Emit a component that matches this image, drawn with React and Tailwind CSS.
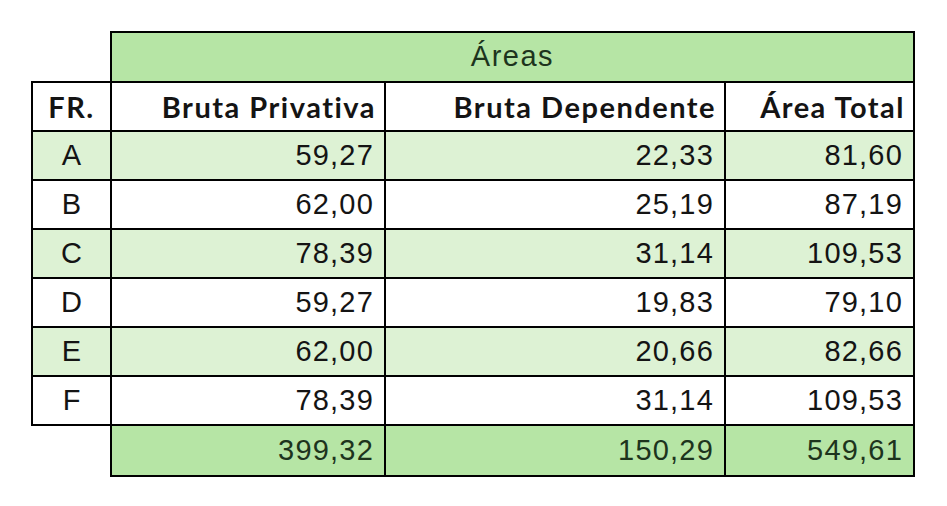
import React from "react"

const rows = [
  ["A", "59,27", "22,33", "81,60"],
  ["B", "62,00", "25,19", "87,19"],
  ["C", "78,39", "31,14", "109,53"],
  ["D", "59,27", "19,83", "79,10"],
  ["E", "62,00", "20,66", "82,66"],
  ["F", "78,39", "31,14", "109,53"],
]

const num = "font-['Liberation_Sans',Arial,sans-serif] text-[29px] tracking-[1.2px] text-right pr-[10px]"
const head = "font-['Lato',sans-serif] font-bold text-[29px] text-right pr-[8px] tracking-[1.5px]"

export default function App() {
  return (
    <div className="w-[947px] h-[506px] bg-white pt-[31px] pl-[31px] text-[#141414]">
      <table className="border-collapse table-fixed w-[884px]">
        <colgroup>
          <col className="w-[79px]" />
          <col className="w-[274px]" />
          <col className="w-[340px]" />
          <col className="w-[189px]" />
        </colgroup>
        <tbody>
          {/* Areas header */}
          <tr className="h-[50px]">
            <td className="border-0" />
            <td
              colSpan={3}
              className="border-2 border-black bg-[#b6e5a5] text-center font-['Liberation_Sans',Arial,sans-serif] text-[29px] tracking-[1.5px] text-[#1d341d]"
            >
              Áreas
            </td>
          </tr>
          <tr className="h-[49px]">
            <td className="border-2 border-black text-center font-['Lato',sans-serif] font-bold text-[29px] tracking-[1.5px]">FR.</td>
            <td className={`border-2 border-black ${head}`}>Bruta Privativa</td>
            <td className={`border-2 border-black ${head}`}>Bruta Dependente</td>
            <td className={`border-2 border-black ${head}`}>Área Total</td>
          </tr>
          {rows.map((r, i) => (
            <tr key={r[0]} className={`h-[49px] ${i % 2 === 0 ? "bg-[#ddf2d4]" : "bg-white"}`}>
              <td className="border-2 border-black text-center font-['Liberation_Sans',Arial,sans-serif] text-[29px]">
                {r[0]}
              </td>
              <td className={`border-2 border-black ${num}`}>{r[1]}</td>
              <td className={`border-2 border-black ${num}`}>{r[2]}</td>
              <td className={`border-2 border-black ${num}`}>{r[3]}</td>
            </tr>
          ))}
          {/* totals */}
          <tr className="h-[51px]">
            <td className="border-0 bg-white" />
            <td className={`border-2 border-black bg-[#b6e5a5] text-[#1d341d] ${num}`}>399,32</td>
            <td className={`border-2 border-black bg-[#b6e5a5] text-[#1d341d] ${num}`}>150,29</td>
            <td className={`border-2 border-black bg-[#b6e5a5] text-[#1d341d] ${num}`}>549,61</td>
          </tr>
        </tbody>
      </table>
    </div>
  )
}
